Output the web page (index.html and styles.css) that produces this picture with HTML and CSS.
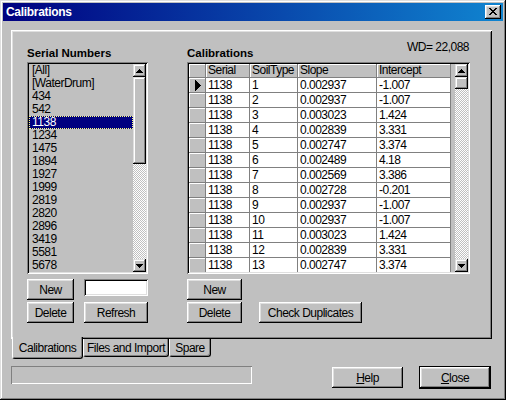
FILE: index.html
```html
<!DOCTYPE html>
<html>
<head>
<meta charset="utf-8">
<title>Calibrations</title>
<link rel="stylesheet" href="styles.css">
</head>
<body>
<div class="window">
  <div class="titlebar">
    <span class="title">Calibrations</span>
    <button class="tb-close" aria-label="Close">
      <svg width="8" height="7" viewBox="0 0 8 7" shape-rendering="crispEdges"><path d="M0 0h2v1H0zM6 0h2v1H6zM1 1h2v1H1zM5 1h2v1H5zM2 2h4v1H2zM3 3h2v1H3zM2 4h4v1H2zM1 5h2v1H1zM5 5h2v1H5zM0 6h2v1H0zM6 6h2v1H6z" fill="#000"/></svg>
    </button>
  </div>
  <div class="client">
    <div class="panel">
      <div class="col-left">
        <div class="heading">Serial Numbers</div>
        <div class="listbox">
          <ul class="items">
            <li>[All]</li>
            <li>[WaterDrum]</li>
            <li>434</li>
            <li>542</li>
            <li class="sel">1138</li>
            <li>1234</li>
            <li>1475</li>
            <li>1894</li>
            <li>1927</li>
            <li>1999</li>
            <li>2819</li>
            <li>2820</li>
            <li>2896</li>
            <li>3419</li>
            <li>5581</li>
            <li>5678</li>
          </ul>
          <div class="vscroll">
            <div class="sb-btn"><svg width="7" height="4" viewBox="0 0 7 4" shape-rendering="crispEdges"><path d="M3 0h1v1H3zM2 1h3v1H2zM1 2h5v1H1zM0 3h7v1H0z" fill="#000"/></svg></div>
            <div class="thumb thumb-list"></div>
            <div class="track"></div>
            <div class="sb-btn"><svg width="7" height="4" viewBox="0 0 7 4" shape-rendering="crispEdges"><path d="M0 0h7v1H0zM1 1h5v1H1zM2 2h3v1H2zM3 3h1v1H3z" fill="#000"/></svg></div>
          </div>
        </div>
        <div class="btnrow">
          <button class="btn w-new">New</button>
          <div class="textbox"></div>
        </div>
        <div class="btnrow">
          <button class="btn w-new">Delete</button>
          <button class="btn w-refresh">Refresh</button>
        </div>
      </div>
      <div class="col-right">
        <div class="head-row">
          <span class="heading">Calibrations</span>
          <span class="wd">WD= 22,088</span>
        </div>
        <div class="grid">
          <div class="gtable">
            <div class="ind"></div><div class="h">Serial</div><div class="h">SoilType</div><div class="h">Slope</div><div class="h">Intercept</div>
            <div class="ind"><svg width="6" height="11" viewBox="0 0 6 11" shape-rendering="crispEdges"><path d="M0 0h1v11H0zM1 1h1v9H1zM2 2h1v7H2zM3 3h1v5H3zM4 4h1v3H4zM5 5h1v1H5z" fill="#000"/></svg></div><div>1138</div><div>1</div><div>0.002937</div><div>-1.007</div>
            <div class="ind"></div><div>1138</div><div>2</div><div>0.002937</div><div>-1.007</div>
            <div class="ind"></div><div>1138</div><div>3</div><div>0.003023</div><div>1.424</div>
            <div class="ind"></div><div>1138</div><div>4</div><div>0.002839</div><div>3.331</div>
            <div class="ind"></div><div>1138</div><div>5</div><div>0.002747</div><div>3.374</div>
            <div class="ind"></div><div>1138</div><div>6</div><div>0.002489</div><div>4.18</div>
            <div class="ind"></div><div>1138</div><div>7</div><div>0.002569</div><div>3.386</div>
            <div class="ind"></div><div>1138</div><div>8</div><div>0.002728</div><div>-0.201</div>
            <div class="ind"></div><div>1138</div><div>9</div><div>0.002937</div><div>-1.007</div>
            <div class="ind"></div><div>1138</div><div>10</div><div>0.002937</div><div>-1.007</div>
            <div class="ind"></div><div>1138</div><div>11</div><div>0.003023</div><div>1.424</div>
            <div class="ind"></div><div>1138</div><div>12</div><div>0.002839</div><div>3.331</div>
            <div class="ind"></div><div>1138</div><div>13</div><div>0.002747</div><div>3.374</div>
          </div>
          <div class="ggap"></div>
          <div class="vscroll">
            <div class="sb-btn"><svg width="7" height="4" viewBox="0 0 7 4" shape-rendering="crispEdges"><path d="M3 0h1v1H3zM2 1h3v1H2zM1 2h5v1H1zM0 3h7v1H0z" fill="#000"/></svg></div>
            <div class="thumb thumb-grid"></div>
            <div class="track"></div>
            <div class="sb-btn"><svg width="7" height="4" viewBox="0 0 7 4" shape-rendering="crispEdges"><path d="M0 0h7v1H0zM1 1h5v1H1zM2 2h3v1H2zM3 3h1v1H3z" fill="#000"/></svg></div>
          </div>
        </div>
        <div class="btnrow">
          <button class="btn w-gnew">New</button>
        </div>
        <div class="btnrow gap-wide">
          <button class="btn w-gnew">Delete</button>
          <button class="btn w-check">Check Duplicates</button>
        </div>
      </div>
    </div>
    <div class="tabs">
      <div class="tab active w-t1">Calibrations</div>
      <div class="tab w-t2">Files and Import</div>
      <div class="tab w-t3">Spare</div>
    </div>
    <div class="footer">
      <div class="status"></div>
      <button class="btn help"><u>H</u>elp</button>
      <button class="btn close default"><u>C</u>lose</button>
    </div>
  </div>
</div>
</body>
</html>
```

FILE: styles.css
```css
* { box-sizing: border-box; }
html, body { margin: 0; padding: 0; }
body {
  width: 506px;
  height: 400px;
  overflow: hidden;
  background: #c0c0c0;
  font-family: "Liberation Sans", Arial, sans-serif;
  font-size: 12px;
  letter-spacing: -0.5px;
  color: #000;
}
.window {
  width: 506px;
  height: 400px;
  padding: 3px;
  background: #c0c0c0;
  box-shadow: inset -1px -1px #000, inset 1px 1px #dfdfdf, inset -2px -2px #808080, inset 2px 2px #fff;
}
.titlebar {
  height: 18px;
  display: flex;
  align-items: center;
  justify-content: space-between;
  padding: 0 2px 0 3px;
  background: linear-gradient(90deg, #000080, #1084d0);
}
.title {
  color: #fff;
  font-weight: bold;
  font-size: 12px;
  letter-spacing: -0.3px;
  line-height: 18px;
}
.tb-close {
  width: 16px;
  height: 14px;
  padding: 0 0 1px 0;
  border: 0;
  background: #c0c0c0;
  display: flex;
  align-items: center;
  justify-content: center;
  box-shadow: inset -1px -1px #000, inset 1px 1px #fff, inset -2px -2px #808080, inset 2px 2px #dfdfdf;
}
.client {
  padding: 9px 11px 0 8px;
}
.panel {
  height: 309px;
  padding: 16px 0 0 16px;
  display: flex;
  gap: 39px;
  box-shadow: inset 1px 1px #fff, inset -1px -1px #000, inset 2px 2px #dfdfdf, inset -2px -2px #808080;
}
.col-left { width: 121px; }
.col-right { width: 283px; }
.heading {
  font-weight: bold;
  font-size: 11.5px;
  letter-spacing: 0;
  height: 14px;
  line-height: 14px;
  margin-bottom: 2px;
  white-space: nowrap;
}
.head-row {
  display: flex;
  justify-content: space-between;
  align-items: flex-start;
  height: 14px;
  margin-bottom: 2px;
}
.head-row .heading { margin: 0; }
.wd {
  margin-top: -6px;
  line-height: 14px;
  padding-right: 1px;
  white-space: nowrap;
}
.listbox {
  height: 212px;
  padding: 2px;
  display: flex;
  background: #c0c0c0;
  box-shadow: inset 1px 1px #808080, inset -1px -1px #fff, inset 2px 2px #000, inset -2px -2px #dfdfdf;
}
.items {
  list-style: none;
  margin: 0;
  padding: 0;
  flex: 1;
  overflow: hidden;
}
.items li {
  height: 13px;
  line-height: 13px;
  padding-left: 3px;
  white-space: nowrap;
}
.items li.sel {
  background: #000080;
  color: #fff;
  outline: 1px dotted #ffff80;
  outline-offset: -1px;
}
.vscroll {
  width: 13px;
  flex: none;
  display: flex;
  flex-direction: column;
}
.sb-btn, .thumb {
  flex: none;
  background: #c0c0c0;
  box-shadow: inset -1px -1px #000, inset 1px 1px #dfdfdf, inset -2px -2px #808080, inset 2px 2px #fff;
}
.sb-btn {
  height: 13px;
  display: flex;
  align-items: center;
  justify-content: center;
}
.sb-btn svg { display: block; }
.thumb-list { height: 87px; }
.thumb-grid { height: 12px; }
.track {
  flex: 1;
  background-color: #fff;
  background-image: conic-gradient(#c0c0c0 25%, #fff 0 50%, #c0c0c0 0 75%, #fff 0);
  background-size: 2px 2px;
}
.btnrow {
  display: flex;
  gap: 10px;
  margin-top: 5px;
  height: 21px;
}
.btnrow + .btnrow { margin-top: 2px; }
.btnrow.gap-wide { gap: 17px; }
.btn {
  height: 21px;
  padding: 0;
  border: 0;
  font: inherit;
  letter-spacing: inherit;
  color: #000;
  background: #c0c0c0;
  text-align: center;
  box-shadow: inset -1px -1px #000, inset 1px 1px #fff, inset -2px -2px #808080, inset 2px 2px #dfdfdf;
}
.w-new { width: 47px; }
.w-refresh { width: 64px; }
.w-gnew { width: 55px; }
.w-check { width: 103px; }
.textbox {
  width: 64px;
  height: 17px;
  background: #fff;
  box-shadow: inset 1px 1px #808080, inset -1px -1px #fff, inset 2px 2px #000, inset -2px -2px #dfdfdf;
}
.grid {
  height: 212px;
  padding: 2px;
  display: flex;
  background: #c0c0c0;
  box-shadow: inset 1px 1px #808080, inset -1px -1px #fff, inset 2px 2px #000, inset -2px -2px #dfdfdf;
}
.gtable {
  width: 262px;
  height: 208px;
  flex: none;
  overflow: hidden;
  display: grid;
  grid-template-columns: 17px 44px 48px 79px 74px;
  grid-template-rows: 14px;
  grid-auto-rows: 15px;
  align-content: start;
}
.gtable > div {
  border-right: 1px solid #808080;
  border-bottom: 1px solid #808080;
  background: #fff;
  padding-left: 2px;
  line-height: 14px;
  white-space: nowrap;
  overflow: hidden;
}
.gtable > .h {
  background: #c0c0c0;
  box-shadow: inset 1px 1px #fff;
  line-height: 13px;
}
.gtable > .ind {
  background: #c0c0c0;
  box-shadow: inset 1px 1px #fff;
  padding: 0 0 0 1px;
  display: flex;
  align-items: center;
  justify-content: center;
}
.ggap { width: 4px; flex: none; }
.tabs {
  display: flex;
  align-items: flex-start;
  margin: -2px 0 0 1px;
  height: 22px;
}
.tab {
  height: 18px;
  margin-top: 2px;
  display: flex;
  align-items: center;
  justify-content: center;
  white-space: nowrap;
  background: #c0c0c0;
  border-left: 1px solid #fff;
  border-right: 1px solid #000;
  border-bottom: 1px solid #000;
  border-radius: 0 0 3px 3px;
  box-shadow: inset -1px -1px #808080;
}
.tab.active {
  height: 22px;
  margin-top: 0;
  padding-top: 1px;
}
.w-t1 { width: 71px; }
.w-t2 { width: 86px; }
.w-t3 { width: 42px; }
.footer {
  display: flex;
  align-items: flex-start;
  margin-top: 7px;
}
.status {
  width: 241px;
  height: 18px;
  box-shadow: inset 1px 1px #808080, inset -1px -1px #fff;
}
.help {
  width: 71px;
  height: 21px;
  margin: 1px 0 0 80px;
}
.close {
  width: 72px;
  height: 23px;
  margin-left: 16px;
}
.btn.default {
  box-shadow: inset 0 0 0 1px #000, inset -2px -2px #000, inset 2px 2px #fff, inset -3px -3px #808080, inset 3px 3px #dfdfdf;
}
```
